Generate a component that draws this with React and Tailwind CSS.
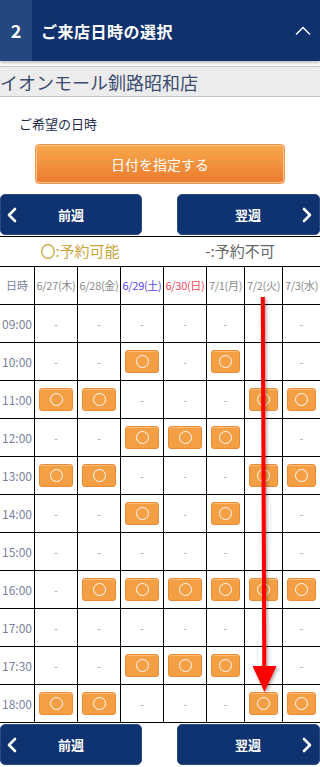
import React from 'react';

const days = [
  { label: '6/27(木)', color: 'text-[#8a8a8a]' },
  { label: '6/28(金)', color: 'text-[#8a8a8a]' },
  { label: '6/29(土)', color: 'text-[#5b45f2]' },
  { label: '6/30(日)', color: 'text-[#f2485a]' },
  { label: '7/1(月)', color: 'text-[#8a8a8a]' },
  { label: '7/2(火)', color: 'text-[#8a8a8a]' },
  { label: '7/3(水)', color: 'text-[#8a8a8a]' },
];

// 1 = 予約可能, 0 = 予約不可
const slots = [
  ['09:00', [0, 0, 0, 0, 0, 0, 0]],
  ['10:00', [0, 0, 1, 0, 1, 0, 0]],
  ['11:00', [1, 1, 0, 0, 0, 1, 1]],
  ['12:00', [0, 0, 1, 1, 1, 0, 0]],
  ['13:00', [1, 1, 0, 0, 0, 1, 1]],
  ['14:00', [0, 0, 1, 0, 1, 0, 0]],
  ['15:00', [0, 0, 0, 0, 0, 0, 0]],
  ['16:00', [0, 1, 1, 1, 1, 1, 1]],
  ['17:00', [0, 0, 0, 0, 0, 0, 0]],
  ['17:30', [0, 0, 1, 1, 1, 0, 0]],
  ['18:00', [1, 1, 0, 0, 0, 1, 1]],
];

const font = { fontFamily: '"Noto Sans CJK JP", "Noto Sans", sans-serif' };

function WeekNav() {
  return (
    <div className="flex justify-between h-[41px]">
      <button className="w-[142px] h-full flex items-center rounded-[5px] bg-[#0e3370] border border-[#2a4c86] text-white">
        <svg width="12" height="16" viewBox="0 0 12 16" className="ml-[5px]">
          <path d="M9 2 L3 8 L9 14" fill="none" stroke="white" strokeWidth="2.6" strokeLinecap="round" strokeLinejoin="round" />
        </svg>
        <span className="flex-1 text-center text-[13px] font-bold pr-[17px]">前週</span>
      </button>
      <button className="w-[143px] h-full flex items-center rounded-[5px] bg-[#0e3370] border border-[#2a4c86] text-white">
        <span className="flex-1 text-center text-[13px] font-bold pl-[17px]">翌週</span>
        <svg width="12" height="16" viewBox="0 0 12 16" className="mr-[6px]">
          <path d="M3 2 L9 8 L3 14" fill="none" stroke="white" strokeWidth="2.6" strokeLinecap="round" strokeLinejoin="round" />
        </svg>
      </button>
    </div>
  );
}

function Slot({ ok }) {
  if (!ok) return <span className="text-[10px] text-[#999]">-</span>;
  return (
    <span className="w-[80%] h-[23px] rounded-[3px] bg-[#f59f45] border border-[#ec8a36] shadow-[inset_0_1px_0_#f9bf7c] flex items-center justify-center">
      <span className="w-[13px] h-[13px] rounded-full border-[1.5px] border-white" />
    </span>
  );
}

export default function App() {
  return (
    <div className="relative w-[320px] h-[767px] bg-white overflow-hidden" style={font}>
      {/* ステップ見出し */}
      <div className="h-[61px] flex items-center bg-[#0f316c] shadow-[0_2px_3px_rgba(0,0,0,0.25)]">
        <div className="w-[32px] h-full bg-[#25477f] flex items-center justify-center text-white text-[18px] font-bold">2</div>
        <div className="ml-[9px] flex-1 text-white text-[16px] font-bold tracking-[0.5px]">ご来店日時の選択</div>
        <svg width="16" height="10" viewBox="0 0 16 10" className="mr-[9px]">
          <path d="M1 8.5 L8 1.5 L15 8.5" fill="none" stroke="white" strokeWidth="1.4" />
        </svg>
      </div>

      {/* 店舗名 */}
      <div className="mt-[5px] h-[31px] bg-[#ececec] border-y border-[#c6c6c6] flex items-center text-[18px] text-[#3c4c70] leading-none whitespace-nowrap">
        イオンモール釧路昭和店
      </div>

      <div className="pl-[19px] pt-[19px] text-[13px] text-[#1e2c4f] leading-[16px]">ご希望の日時</div>

      <div className="mt-[12px] flex">
        <button className="ml-[35px] w-[250px] h-[40px] rounded-[4px] bg-gradient-to-b from-[#f6a94b] to-[#ec792e] border border-[#f0934a] shadow-[inset_0_0_0_1px_#f8c793] text-white text-[14px]">
          日付を指定する
        </button>
      </div>

      <div className="mt-[10px]">
        <WeekNav />
      </div>

      {/* 凡例 */}
      <div className="mt-[1px] h-[30px] border-t border-black flex items-center text-[15px]">
        <div className="w-1/2 text-center text-[#c9a53c]">〇:予約可能</div>
        <div className="w-1/2 text-center text-[#666]">-:予約不可</div>
      </div>

      {/* 予約表 */}
      <div className="grid grid-cols-[34px_43px_43px_43px_43px_38px_38px_38px] border-t border-black">
        <div className="h-[38px] border-b border-black flex items-center justify-center text-[11px] text-[#7a7f9c]">日時</div>
        {days.map((d) => (
          <div key={d.label} className={`h-[38px] border-b border-l border-black flex items-center justify-center text-[11px] whitespace-nowrap tracking-[-0.3px] ${d.color}`}>
            {d.label}
          </div>
        ))}
        {slots.map(([time, row]) => (
          <React.Fragment key={time}>
            <div className="h-[38px] border-b border-black flex items-center justify-center text-[12px] text-[#7a7f9c]">{time}</div>
            {row.map((ok, i) => (
              <div key={i} className="h-[38px] border-b border-l border-black flex items-center justify-center">
                <Slot ok={ok} />
              </div>
            ))}
          </React.Fragment>
        ))}
      </div>

      <div className="mt-[1px]">
        <WeekNav />
      </div>

      {/* 注釈の矢印 */}
      <svg className="absolute left-0 top-0 pointer-events-none" width="320" height="767" viewBox="0 0 320 767">
        <defs>
          <filter id="sh" x="-50%" y="-10%" width="200%" height="120%">
            <feDropShadow dx="1.5" dy="1.5" stdDeviation="1.5" floodColor="#000" floodOpacity="0.35" />
          </filter>
        </defs>
        <g filter="url(#sh)">
          <line x1="262.8" y1="297" x2="264.3" y2="668" stroke="#ff0000" strokeWidth="4" />
          <polygon points="252.5,666 276.5,666 264.5,692" fill="#ff0000" />
        </g>
      </svg>
    </div>
  );
}
